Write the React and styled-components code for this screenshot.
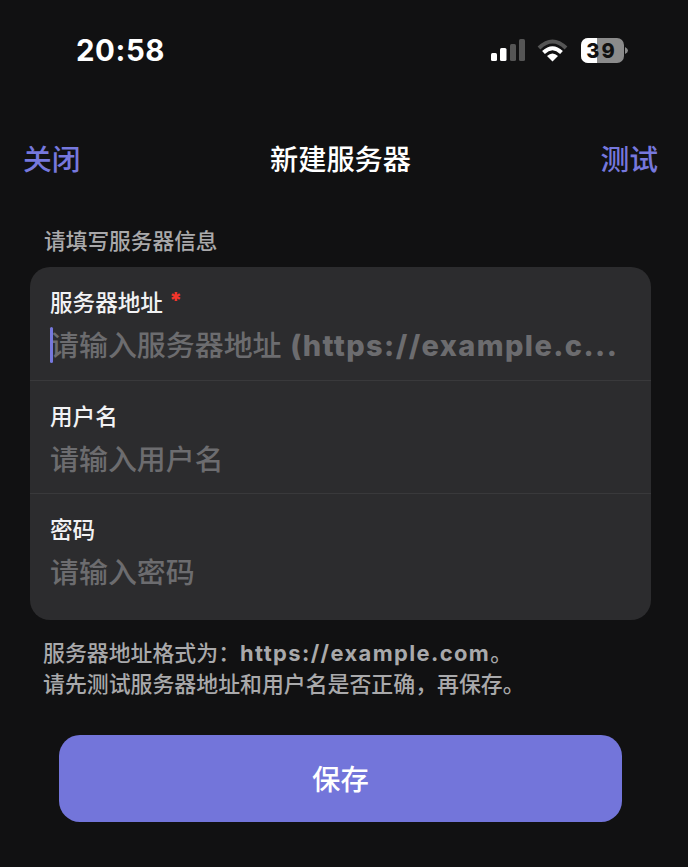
import React from "react";
import styled, { createGlobalStyle } from "styled-components";

const GlobalStyle = createGlobalStyle`
  html, body {
    margin: 0;
    padding: 0;
    background: #111112;
  }
`;

const Page = styled.div`
  width: 688px;
  height: 867px;
  overflow: hidden;
  box-sizing: border-box;
  background: #111112;
  color: #fff;
  font-family: Inter, "Noto Sans CJK SC", sans-serif;
`;

const StatusBar = styled.div`
  height: 100px;
  box-sizing: border-box;
  padding: 32px 59px 0 76px;
  display: flex;
  justify-content: space-between;
  align-items: flex-start;
`;

const Clock = styled.div`
  margin-top: 1px;
  font-size: 29.4px;
  line-height: 36px;
  font-weight: 700;
  letter-spacing: 0.6px;
`;

const StatusIcons = styled.svg`
  display: block;
  margin-top: 6px;
`;

const NavBar = styled.div`
  height: 40px;
  margin-top: 40px;
  padding: 0 30px 0 23px;
  display: flex;
  align-items: center;
  justify-content: space-between;
`;

const NavLink = styled.div`
  font-size: 28.8px;
  line-height: 40px;
  font-weight: 500;
  color: #7678dd;
`;

const NavTitle = styled.div`
  font-size: 28.2px;
  line-height: 40px;
  font-weight: 500;
  color: #fff;
`;

const Content = styled.div`
  padding: 0 37px 0 30px;
`;

const SectionTitle = styled.div`
  margin: 45px 0 10px 14px;
  font-size: 21.7px;
  line-height: 32px;
  font-weight: 500;
  color: #a9a9ab;
`;

const Card = styled.div`
  background: #2c2c2e;
  border-radius: 20px;
  overflow: hidden;
`;

const Field = styled.div`
  height: ${(p) => (p.$last ? "126px" : "113.5px")};
  box-sizing: border-box;
  padding: 20px 30px 0 20px;
  border-bottom: ${(p) => (p.$last ? "none" : "1px solid #39393b")};
`;

const Label = styled.div`
  font-size: 22.6px;
  line-height: 32px;
  font-weight: 500;
  color: #f2f2f4;
  display: flex;
  align-items: flex-start;
  gap: 6px;
`;

const Required = styled.span`
  color: #f2352b;
  font-size: 22px;
  line-height: 26px;
  font-weight: 900;
`;

const InputRow = styled.div`
  position: relative;
  margin-top: 4px;
  height: 46px;
  line-height: 46px;
  font-size: 28.95px;
  font-weight: 500;
  color: #6c6c6f;
  white-space: nowrap;
`;

const Caret = styled.span`
  position: absolute;
  left: 0;
  top: 4px;
  width: 3px;
  height: 36px;
  border-radius: 2px;
  background: #7678dd;
`;

const Latin = styled.span`
  margin-left: 1px;
  font-weight: 800;
  letter-spacing: 1.4px;
`;

const Hint = styled.div`
  margin: 18px 0 0 13px;
  font-size: 21.9px;
  line-height: 31px;
  font-weight: 500;
  color: #a9a9ab;
`;

const HintLatin = styled.span`
  font-weight: 700;
  letter-spacing: 1.4px;
`;

const SaveButton = styled.button`
  display: block;
  width: 563px;
  height: 87px;
  margin: 35px 0 0 29px;
  padding: 0 0 2px;
  border: none;
  border-radius: 21px;
  background: #7375da;
  color: #fff;
  font-family: inherit;
  font-size: 28.4px;
  font-weight: 500;
`;

const fields = [
  { label: "用户名", placeholder: "请输入用户名" },
  { label: "密码", placeholder: "请输入密码", last: true },
];

export default function App() {
  return (
    <Page>
      <GlobalStyle />
      <StatusBar>
        <Clock>20:58</Clock>
        <StatusIcons width="138" height="26" viewBox="0 0 138 26">
          {/* signal */}
          <rect x="0" y="15" width="6" height="8" rx="1.5" fill="#fff" />
          <rect x="9" y="10" width="6.5" height="13" rx="1.5" fill="#fff" />
          <rect x="19" y="6" width="6" height="17" rx="1.5" fill="#555" />
          <rect x="28" y="1" width="6" height="22" rx="1.5" fill="#555" />
          {/* wifi */}
          <path d="M48 10 Q61.5 -3 75 10" stroke="#555" strokeWidth="4" fill="none" />
          <path d="M52.5 14.5 Q61.5 6 70.5 14.5" stroke="#fff" strokeWidth="4" fill="none" />
          <path d="M56 18 Q61.5 13 67 18 L61.5 23.5 Z" fill="#fff" />
          {/* battery */}
          <rect x="90" y="0" width="43" height="25" rx="7" fill="#8b8b8b" />
          <path d="M97 0 H106 V25 H97 A7 7 0 0 1 90 18 V7 A7 7 0 0 1 97 0 Z" fill="#fff" />
          <path d="M134 9 Q137 10.5 137 12.5 Q137 14.5 134 16 Z" fill="#8b8b8b" />
          <text x="110.5" y="20" textAnchor="middle" fontFamily="Inter, sans-serif" fontSize="20" fontWeight="800" letterSpacing="2" fill="#111">39</text>
        </StatusIcons>
      </StatusBar>
      <NavBar>
        <NavLink>关闭</NavLink>
        <NavTitle>新建服务器</NavTitle>
        <NavLink>测试</NavLink>
      </NavBar>
      <Content>
        <SectionTitle>请填写服务器信息</SectionTitle>
        <Card>
          <Field>
            <Label>
              服务器地址 <Required>*</Required>
            </Label>
            <InputRow>
              <Caret />
              请输入服务器地址 <Latin>(https://example.c...</Latin>
            </InputRow>
          </Field>
          {fields.map((f) => (
            <Field key={f.label} $last={f.last}>
              <Label>{f.label}</Label>
              <InputRow>{f.placeholder}</InputRow>
            </Field>
          ))}
        </Card>
        <Hint>
          服务器地址格式为：<HintLatin>https://example.com</HintLatin>。
          <br />
          请先测试服务器地址和用户名是否正确，再保存。
        </Hint>
        <SaveButton>保存</SaveButton>
      </Content>
    </Page>
  );
}
